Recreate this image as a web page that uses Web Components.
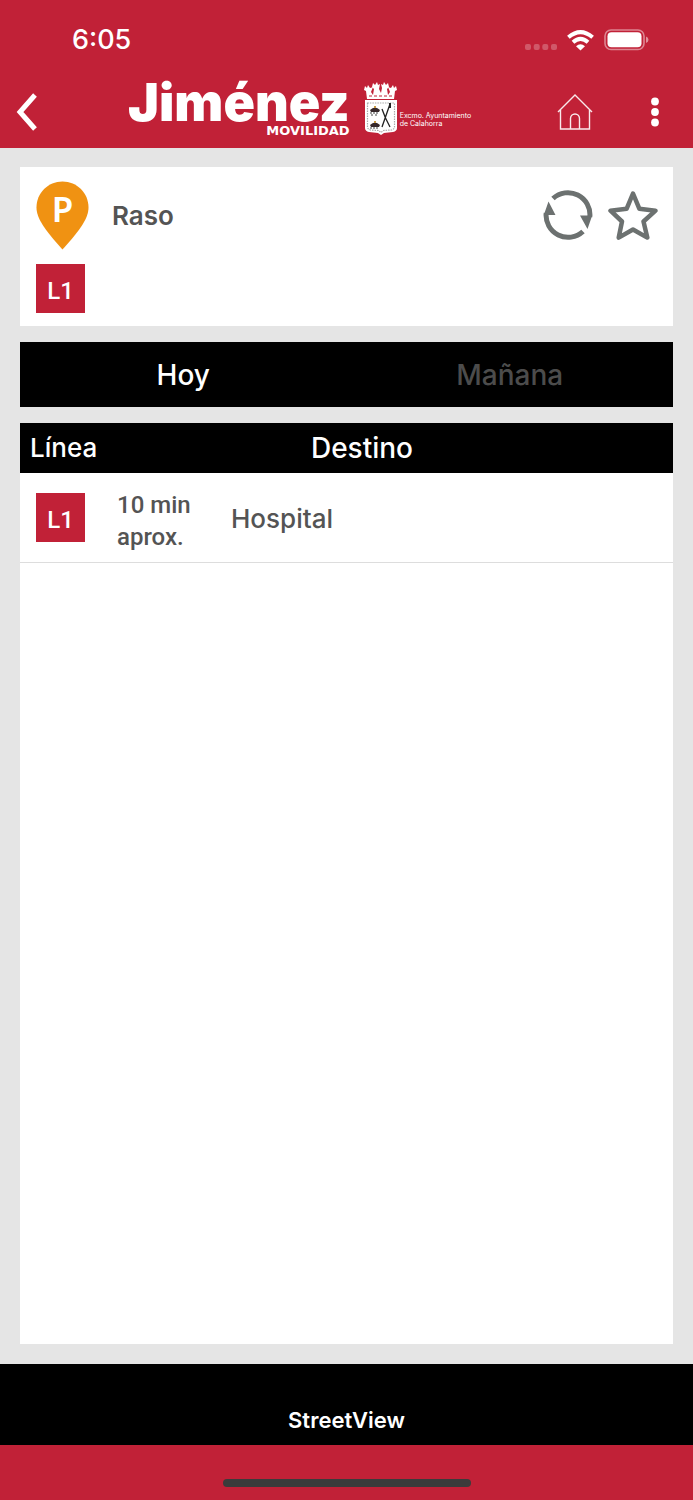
<!DOCTYPE html>
<html lang="es">
<head>
<meta charset="utf-8">
<meta name="viewport" content="width=device-width, initial-scale=1">
<title>Jiménez Movilidad – Raso</title>
<style>
html, body { margin: 0; }
body {
  --brand: #c12137;
  --ink: #545454;
  background: #e5e5e5;
  color: var(--ink);
  font-family: Inter, "Liberation Sans", sans-serif;
}
</style>
</head>
<body>
<stop-app></stop-app>
<script>
function define(name, html, setup) {
  const template = document.createElement('template');
  template.innerHTML = '<style>*{box-sizing:border-box}button{font:inherit;color:inherit;background:none;border:0;padding:0;margin:0;cursor:pointer}svg{display:block}</style>' + html;
  customElements.define(name, class extends HTMLElement {
    constructor() {
      super();
      this.attachShadow({ mode: 'open' }).append(template.content.cloneNode(true));
      if (setup) setup(this.shadowRoot);
    }
  });
}

define('status-bar', `
<style>
:host { display: flex; justify-content: space-between; align-items: center; box-sizing: border-box; height: 78px; padding: 2px 44px 0 72px; color: #fff; }
time { font-size: 27px; font-weight: 500; line-height: 32px; }
.signs { display: flex; align-items: center; gap: 10px; }
</style>
<time>6:05</time>
<div class="signs">
  <svg width="32" height="22" fill="#fff" fill-opacity=".25" aria-hidden="true"><rect x="0" y="15" width="6" height="6" rx="2"/><rect x="8.700" y="15" width="6" height="6" rx="2"/><rect x="17.300" y="15" width="6" height="6" rx="2"/><rect x="26" y="15" width="6" height="6" rx="2"/></svg>
  <svg width="27" height="21" viewBox="0 0 27 21" role="img" aria-label="Wi-Fi"><g fill="none" stroke="#fff" stroke-width="4"><path d="M1.400 7.300Q13.500-3 25.600 7.300"/><path d="M6 12.200Q13.500 5.500 21 12.200"/></g><path d="M9 16.200Q13.500 12.500 18 16.200L13.500 20.500Z" fill="#fff"/></svg>
  <svg width="45" height="22" viewBox="0 0 45 22" role="img" aria-label="Batería"><rect x="1" y="1" width="39" height="19.500" rx="6" fill="none" stroke="#fff" stroke-opacity=".45" stroke-width="1.600"/><rect x="3.500" y="3.300" width="34" height="15" rx="4" fill="#fff"/><path d="M42 7.500q2.500 1 2.500 3.300T42 14z" fill="#fff" fill-opacity=".5"/></svg>
</div>`);

define('brand-logo', `
<style>
:host { display: flex; align-items: center; gap: 14px; color: #fff; }
.name { display: flex; flex-direction: column; align-items: flex-end; }
.word { font-size: 52px; font-weight: 900; line-height: 44px; }
.sub { font-family: "DejaVu Sans", sans-serif; font-weight: 700; font-size: 13px; line-height: 12px; }
.council { display: flex; align-items: center; gap: 2px; font-size: 7px; line-height: 8px; }
.council p { margin: 0; padding-top: 22px; }
</style>
<div class="name"><span class="word">Jiménez</span><span class="sub">MOVILIDAD</span></div>
<div class="council">
  <svg width="34" height="54" viewBox="0 0 34 54" aria-hidden="true">
    <path d="M3 17 2 9 0 8 1 4l2 2 1-3 2 3 3-1-2 5 2 3 1-6-2-2 1-4 2 2 2-3 1 3 2-1-1 5 2 4 1-5-1-4 2 1 1-3 2 3 2-2 1 4-2 2 1 6 2-3-2-5 3 1 2-3 1 3 2-2 1 4-2 1-1 8Z" fill="#fff"/>
    <path d="M5 14h25" stroke="#c12137" stroke-dasharray="3 2"/>
    <path d="M1 18h32v28q0 3-4 4l-9 1-3 2-3-2-9-1q-4-1-4-4Z" fill="#fff"/>
    <path d="M3.500 21v24q0 2 3 3l8 .5 2.500 2 2.500-2 8-.5q3-1 3-3V21Z" fill="none" stroke="#aaa" stroke-width="1.200" stroke-dasharray="1.500 1"/>
    <path d="M6 28q5-5 10 0l-1 2H7ZM6 43q5-5 10 0l-1 2H7Z" fill="#37282b"/><path d="M6 31h2m1 0h2m1 0h2M7 33h2m2 0h2M6 46h2m1 0h2m1 0h2" stroke="#444"/><path d="M10 25h2M10 40h2" stroke="#c79943" stroke-width="2"/>
    <path d="M26 22 18 45M18 27q3 9 8 18" fill="none" stroke="#222" stroke-width="1.300"/><path d="M26 21v5" stroke="#222" stroke-width="2"/>
  </svg>
  <p>Excmo. Ayuntamiento<br>de Calahorra</p>
</div>`);

define('nav-bar', `
<style>
:host { display: flex; align-items: center; box-sizing: border-box; height: 70px; padding: 0 34px 2px 16px; }
brand-logo { margin-left: 90px; margin-right: auto; padding-bottom: 6px; }
.tools { display: flex; align-items: center; gap: 58px; }
</style>
<button aria-label="Volver"><svg width="22" height="38" viewBox="0 0 22 38"><path d="M19 2 4 19l15 17" fill="none" stroke="#fff" stroke-width="5"/></svg></button>
<brand-logo></brand-logo>
<div class="tools">
  <button aria-label="Inicio"><svg width="36" height="36" viewBox="0 0 36 36" fill="none" stroke="#fff" stroke-opacity=".9" stroke-width="1.400"><path d="M1 18 18 1l17 17M3.500 16v19h29V16M13.500 35V24.500a4.500 4.500 0 0 1 9 0V35"/></svg></button>
  <button aria-label="Más opciones"><svg width="8" height="30" fill="#fff"><circle cx="4" cy="4.500" r="3.900"/><circle cx="4" cy="15" r="3.900"/><circle cx="4" cy="25.500" r="3.900"/></svg></button>
</div>`);

define('line-badge', `
<style>
:host { display: grid; place-items: center; width: 49px; height: 49px; padding-top: 4px; box-sizing: border-box; background: var(--brand); color: #fff; font: 500 24px/32px Roboto, sans-serif; }
</style><slot></slot>`);

define('stop-card', `
<style>
:host { display: block; padding: 14px 15px 13px 16px; background: #fff; }
.top { display: flex; align-items: flex-start; height: 69px; margin-bottom: 14px; }
.pin { display: grid; width: 53px; margin-right: 23px; }
.pin > * { grid-area: 1 / 1; }
.pin span { color: #fff; font: 600 35px/56px "Noto Sans", sans-serif; text-align: center; }
h1 { margin: 19px auto 0 0; font-size: 26px; line-height: 32px; font-weight: 600; }
.acts { display: flex; gap: 15px; padding-top: 9px; }
</style>
<div class="top">
  <div class="pin"><svg width="53" height="69" viewBox="0 0 53 69" aria-hidden="true"><path d="M26.500.5C12 .5.500 12 .500 26.500.500 37 8 48 26.500 68.500 45 48 52.500 37 52.500 26.500 52.500 12 41 .5 26.500.5Z" fill="#f09212"/></svg><span>P</span></div>
  <h1><slot></slot></h1>
  <div class="acts">
    <button aria-label="Actualizar"><svg width="50" height="50" viewBox="0 0 50 50"><g fill="none" stroke="#6c7170" stroke-width="5"><path d="M10 8.500A22 22 0 0 1 46.800 27"/><path d="M40 41.500A22 22 0 0 1 3.200 23"/></g><path d="M5.500 11.500 12.500 25H.8ZM44.500 39 37 25.500h12.200Z" fill="#6c7170"/></svg></button>
    <button aria-label="Favorito"><svg width="50" height="50" viewBox="0 0 50 50"><path d="m25 3.500 6.300 15.200 16.200 2-12 10.800 3.800 16.100L25 39.500l-14.300 8.100 3.300-16.100L2.500 20.700l16.200-2Z" fill="none" stroke="#6c7170" stroke-width="4.500" stroke-linejoin="round"/></svg></button>
  </div>
</div>
<line-badge>L1</line-badge>`);

define('day-tabs', `
<style>
:host { display: flex; height: 65px; background: #000; color: #4c4c4c; }
button { flex: 1; font-size: 28px; line-height: 32px; font-weight: 500; }
button[aria-selected=true] { color: #fff; }
</style>
<button role="tab" aria-selected="true">Hoy</button>
<button role="tab" aria-selected="false">Mañana</button>`, root => {
  const tabs = [...root.querySelectorAll('button')];
  tabs.forEach(tab => tab.addEventListener('click', () =>
    tabs.forEach(t => t.setAttribute('aria-selected', t === tab))));
});

define('arrivals-table', `
<style>
:host { display: block; background: #fff; }
table { width: 100%; table-layout: fixed; border-spacing: 0; text-align: left; }
.c1 { width: 97px; } .c2 { width: 114px; }
th, td { padding: 0; }
th { height: 50px; background: #000; color: #fff; font-size: 28px; line-height: 32px; font-weight: 500; }
th:first-child { padding-left: 10px; font-size: 26px; }
th:last-child { text-align: center; padding-right: 66px; }
td { height: 90px; border-bottom: 1px solid #ddd; font-size: 26px; line-height: 32px; font-weight: 500; }
td:first-child { padding-left: 16px; }
td.when { padding-top: 6px; font-family: Roboto, sans-serif; font-size: 24px; }
td:last-child { padding-top: 2px; }
</style>
<table>
  <colgroup><col class="c1"><col class="c2"><col></colgroup>
  <thead><tr><th scope="col">Línea</th><th scope="col" colspan="2">Destino</th></tr></thead>
  <tbody><tr><td><line-badge>L1</line-badge></td><td class="when">10 min<br>aprox.</td><td>Hospital</td></tr></tbody>
</table>`);

define('bottom-bar', `
<style>
:host { display: block; background: var(--brand); padding-bottom: 13px; }
.view { display: block; width: 100%; height: 81px; padding-top: 30px; background: #000; color: #fff; font-size: 22px; line-height: 32px; font-weight: 600; margin-bottom: 34px; }
.grip { width: 248px; height: 8px; margin: 0 auto; border-radius: 4px; background: #3b3b3b; }
</style>
<button class="view">StreetView</button>
<div class="grip"></div>`);

define('stop-app', `
<style>
:host { display: flex; flex-direction: column; min-height: 100vh; }
header { background: var(--brand); }
main { flex: 1; display: flex; flex-direction: column; gap: 16px; padding: 19px 20px 20px; }
arrivals-table { flex: 1; }
</style>
<header><status-bar></status-bar><nav-bar></nav-bar></header>
<main>
  <stop-card>Raso</stop-card>
  <day-tabs role="tablist"></day-tabs>
  <arrivals-table></arrivals-table>
</main>
<bottom-bar></bottom-bar>`);
</script>
</body>
</html>
